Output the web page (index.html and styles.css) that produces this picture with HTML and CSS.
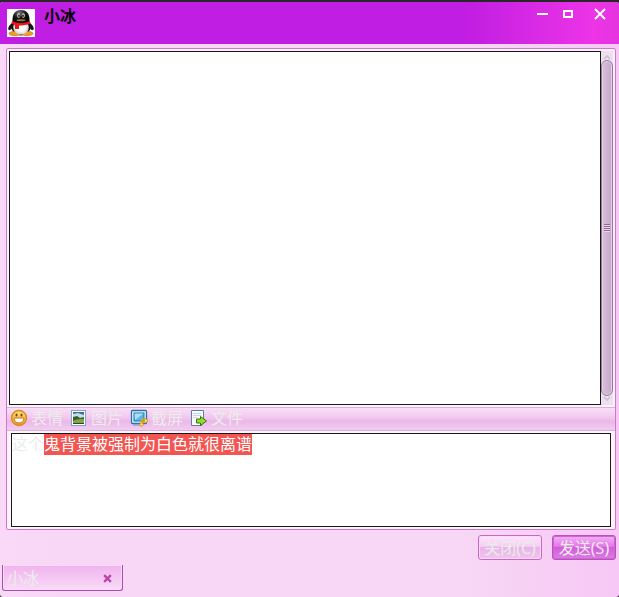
FILE: index.html
```html
<!DOCTYPE html>
<html lang="zh-CN">
<head>
<meta charset="utf-8">
<title>小冰</title>
<link rel="stylesheet" href="styles.css">
</head>
<body>
<div class="window">
  <header class="titlebar">
    <svg class="avatar" viewBox="0 0 28 28" aria-hidden="true">
      <defs>
        <radialGradient id="head" cx=".4" cy=".2" r=".7"><stop offset="0" stop-color="#777"/><stop offset=".5" stop-color="#181818"/><stop offset="1" stop-color="#000"/></radialGradient>
        <radialGradient id="belly"><stop offset=".5" stop-color="#fff"/><stop offset="1" stop-color="#ccc"/></radialGradient>
      </defs>
      <rect width="28" height="28" fill="#fff"/>
      <path d="M6 13C2 16 0 20 2 21s4-3 5-5zM22 13c4 3 6 7 4 8s-4-3-5-5z" fill="#161616"/>
      <ellipse cx="14" cy="18" rx="9.500" ry="8.500" fill="#111"/>
      <ellipse cx="8" cy="24.500" rx="6" ry="2.200" fill="#eda21c" stroke="#a86a14" stroke-width=".6"/>
      <ellipse cx="20" cy="24.500" rx="6" ry="2.200" fill="#eda21c" stroke="#a86a14" stroke-width=".6"/>
      <ellipse cx="14" cy="18.500" rx="7.800" ry="7" fill="url(#belly)"/>
      <path d="M5.500 13C5 5 8 1 14 1s9 4 8.500 12c-5 3-12 3-17 0z" fill="url(#head)"/>
      <ellipse cx="11.700" cy="6.500" rx="1.500" ry="2.300" fill="#ddd"/><ellipse cx="16.300" cy="6.500" rx="1.500" ry="2.300" fill="#ddd"/>
      <ellipse cx="12" cy="6.800" rx=".8" ry="1.300"/><ellipse cx="16" cy="6.800" rx=".8" ry="1.300"/>
      <ellipse cx="14" cy="11.300" rx="4.500" ry="1" fill="#a7752b"/>
      <path d="M5 12c5 2.500 13 2.500 18 0l.5 2.500c-4 1.500-7 2-11.500 2V20H8v-4L4.500 14.500z" fill="#e9151b"/>
    </svg>
    <h1 class="title">小冰</h1>
    <div class="window-controls">
      <button class="control" type="button" aria-label="最小化"><svg viewBox="0 0 12 12"><path d="M1 5h11v2H1z" fill="#fff"/></svg></button>
      <button class="control" type="button" aria-label="最大化"><svg viewBox="0 0 12 12"><path d="M2 3h8v6H2z" fill="none" stroke="#fff" stroke-width="2"/></svg></button>
      <button class="control" type="button" aria-label="关闭窗口"><svg viewBox="0 0 12 12"><path d="M1 1l10 10M11 1L1 11" stroke="#fff" stroke-width="2"/></svg></button>
    </div>
  </header>

  <main class="panel">
    <section class="history">
      <div class="messages" role="log" aria-label="聊天记录"></div>
      <div class="scroll" aria-hidden="true">
        <svg class="arrow" viewBox="0 0 8 5"><path d="M1 4l3-3 3 3" fill="none" stroke="#cfbacf" stroke-width="1.500"/></svg>
        <div class="thumb"><span class="grip"></span></div>
        <svg class="arrow" viewBox="0 0 8 5"><path d="M1 1l3 3 3-3" fill="none" stroke="#cfbacf" stroke-width="1.500"/></svg>
      </div>
    </section>

    <div class="toolbar">
      <button class="tool" type="button">
        <svg class="icon" viewBox="0 0 18 18">
          <defs><linearGradient id="face" x2="0" y2="1"><stop offset="0" stop-color="#ffe07a"/><stop offset="1" stop-color="#f09a1c"/></linearGradient></defs>
          <circle cx="9" cy="9" r="7.500" fill="url(#face)" stroke="#d98a20" stroke-width="1.400"/>
          <ellipse cx="6.500" cy="6" rx="1" ry="1.500" fill="#74400b"/><ellipse cx="11.500" cy="6" rx="1" ry="1.500" fill="#74400b"/>
          <path d="M4 9h10c0 3-2 5-5 5s-5-2-5-5z" fill="#fff" stroke="#c47a1c"/>
        </svg>表情</button>
      <button class="tool" type="button">
        <svg class="icon" viewBox="0 0 18 18">
          <rect x="1.500" y="1.500" width="14" height="15" fill="#fff" stroke="#7fa3d0"/>
          <rect x="3" y="3" width="11" height="12" fill="#3d6c92"/>
          <path d="M3 5l5-1 6 2v4H3z" fill="#c8dbe4"/><path d="M3 8l4-1 3 2 4-1v7H3z" fill="#35612f"/><path d="M3 12c4-2 7-2 11-2v5H3z" fill="#83a443"/>
          <path d="M3 14h11v1H3z" fill="#29491f"/>
        </svg>图片</button>
      <button class="tool" type="button">
        <svg class="icon" viewBox="0 0 18 18">
          <rect x="1.500" y="1.500" width="15" height="13" rx="1" fill="#e5f6ff" stroke="#2873a9" stroke-width="1.300"/>
          <rect x="4" y="4" width="10" height="8" fill="#59b8e5" stroke="#236e9f"/><path d="M4.500 4.500h9L5 11z" fill="#a9e0f6"/>
          <path d="M3 16h8" stroke="#6c9bc0"/>
          <path d="M13 9v5M10 12h6" stroke="#e0a01c" stroke-width="1.600"/>
          <circle cx="11.500" cy="15.500" r="1.700" fill="#ffe36b" stroke="#d89413"/><circle cx="15.800" cy="11.800" r="1.700" fill="#ffe36b" stroke="#d89413"/>
        </svg>截屏</button>
      <button class="tool" type="button">
        <svg class="icon" viewBox="0 0 18 18">
          <path d="M1.500 1.500h12v12l-2 3h-10z" fill="#f8fbff" stroke="#607daa"/>
          <path d="M3 4.500h8M3 6.500h8M3 8.500h4" stroke="#c3d3e8"/>
          <path d="M6.500 10h4V7.500l6 4.500-6 4.500V14h-4z" fill="#9ddc26" stroke="#317713"/>
        </svg>文件</button>
    </div>

    <textarea class="composer" aria-label="消息" spellcheck="false">这个鬼背景被强制为白色就很离谱</textarea>
  </main>

  <div class="actions">
    <button class="action" type="button">关闭(C)</button>
    <button class="action primary" type="button">发送(S)</button>
  </div>

  <footer class="tabs">
    <div class="tab">
      <span>小冰</span>
      <button class="tab-close" type="button" aria-label="关闭标签"><svg viewBox="0 0 8 8"><path d="M1 1l6 6M7 1L1 7" stroke="#ba45aa" stroke-width="2"/></svg></button>
    </div>
  </footer>
</div>
<script src="script.js"></script>
</body>
</html>
```
FILE: styles.css
```css
* { box-sizing: border-box; }

body {
  margin: 0;
  padding-top: 2px;
  background: #2b2728;
  font: 16px/21px "Noto Sans", "Noto Sans CJK SC", sans-serif;
  color: #ececec;
}

button {
  margin: 0;
  padding: 0;
  border: 0;
  background: none;
  color: inherit;
  font: inherit;
}

svg { display: block; }

.window {
  display: flex;
  flex-direction: column;
  height: calc(100vh - 2px);
  border-radius: 3px;
  background: linear-gradient(90deg, #f9d8f8, #f7d7f5 10%, #f7d7f5 75%, #f7c7f5);
  overflow: hidden;
}

.titlebar {
  display: flex;
  align-items: flex-start;
  flex: none;
  height: 42px;
  padding: 6px 13px 0 7px;
  background: linear-gradient(90deg, #c01ee2 75%, #ed34e7 96%, #e534df);
}

.avatar { width: 28px; height: 28px; margin-top: 1px; }

.title {
  margin: -2px 0 0 9px;
  color: #000;
  font-size: 16px;
  font-weight: 700;
  line-height: 21px;
}

.window-controls { display: flex; margin-left: auto; }
.control { width: 12px; height: 12px; margin-left: 14px; }
.control:last-child { margin-left: 20px; }
.control svg { width: 12px; height: 12px; }

.panel {
  display: flex;
  flex-direction: column;
  flex: 1;
  min-height: 0;
  margin: 4px 3px 0 6px;
  padding: 2px 2px 0;
  border: 1px solid #cf78ca;
  border-radius: 2px;
  background: #fff4fd;
}

.history { display: flex; flex: 1; min-height: 0; margin-bottom: 2px; }
.messages { flex: 1; border: 1px solid #181818; background: #fff; }

.scroll {
  display: flex;
  flex-direction: column;
  align-items: center;
  width: 12px;
  padding: 4px 0;
  background: #eee0ef;
}

.arrow { flex: none; width: 8px; height: 5px; }

.thumb {
  display: flex;
  align-items: center;
  justify-content: center;
  flex: 1;
  width: 12px;
  border: 1px solid #9a769c;
  border-radius: 6px;
  background: linear-gradient(90deg, #d8c0d9, #c6a8c9);
  box-shadow: inset 0 0 0 1px #e5d2e6;
}

.grip { width: 6px; height: 8px; background: repeating-linear-gradient(#97649a 0 1px, #ead5ec 1px 2px); }

.toolbar {
  display: flex;
  align-items: center;
  flex: none;
  gap: 7px;
  height: 24px;
  margin: 0 -2px;
  padding: 0 3px;
  border: solid #dcb0da;
  border-width: 1px 0;
  background: linear-gradient(#f8dff7, #f3caef 40%, #ebb8e8 60%, #f2cdf0);
}

.tool { display: flex; align-items: center; gap: 3px; height: 22px; padding-bottom: 2px; }
.icon { width: 18px; height: 18px; }

.composer {
  display: block;
  flex: none;
  height: 94px;
  margin: 2px 2px 2px;
  padding: 0;
  border: 1px solid #181818;
  border-radius: 0;
  outline: 0;
  background: #fff;
  color: #ececec;
  caret-color: transparent;
  font: inherit;
  resize: none;
}

.composer::selection { background: #f35550; color: #fff; }

.actions {
  display: flex;
  flex: none;
  justify-content: flex-end;
  gap: 10px;
  padding: 5px 3px;
}

.action {
  width: 64px;
  height: 25px;
  padding-top: 2px;
  border: 1px solid #cb66c7;
  border-radius: 3px;
  background: linear-gradient(#fce5fa, #f5cff2 45%, #e9b4e5 50%, #f0c5ee);
  box-shadow: inset 0 0 0 1px #f9daf7;
  white-space: nowrap;
}

.primary {
  border-color: #bd4fc0;
  background: linear-gradient(#f2aff4, #e37ae6 45%, #d35bdb 50%, #dc7de2);
  box-shadow: inset 0 0 0 1px #cc67d1;
}

.tabs { display: flex; flex: none; padding: 0 2px 6px; }

.tab {
  display: flex;
  align-items: center;
  justify-content: space-between;
  width: 121px;
  height: 26px;
  padding: 2px 10px 0 4px;
  border: 1px solid #ac4fac;
  border-top: 0;
  border-radius: 0 0 3px 3px;
  background: linear-gradient(#f1b2ee, #f9dbf8);
  box-shadow: inset 0 0 0 1px #f9dcf8;
}

.tab-close { width: 9px; height: 9px; }
.tab-close svg { width: 9px; height: 9px; }
```
FILE: script.js
```js
const composer = document.querySelector(".composer");
composer.focus();
composer.setSelectionRange(2, composer.value.length);
```
